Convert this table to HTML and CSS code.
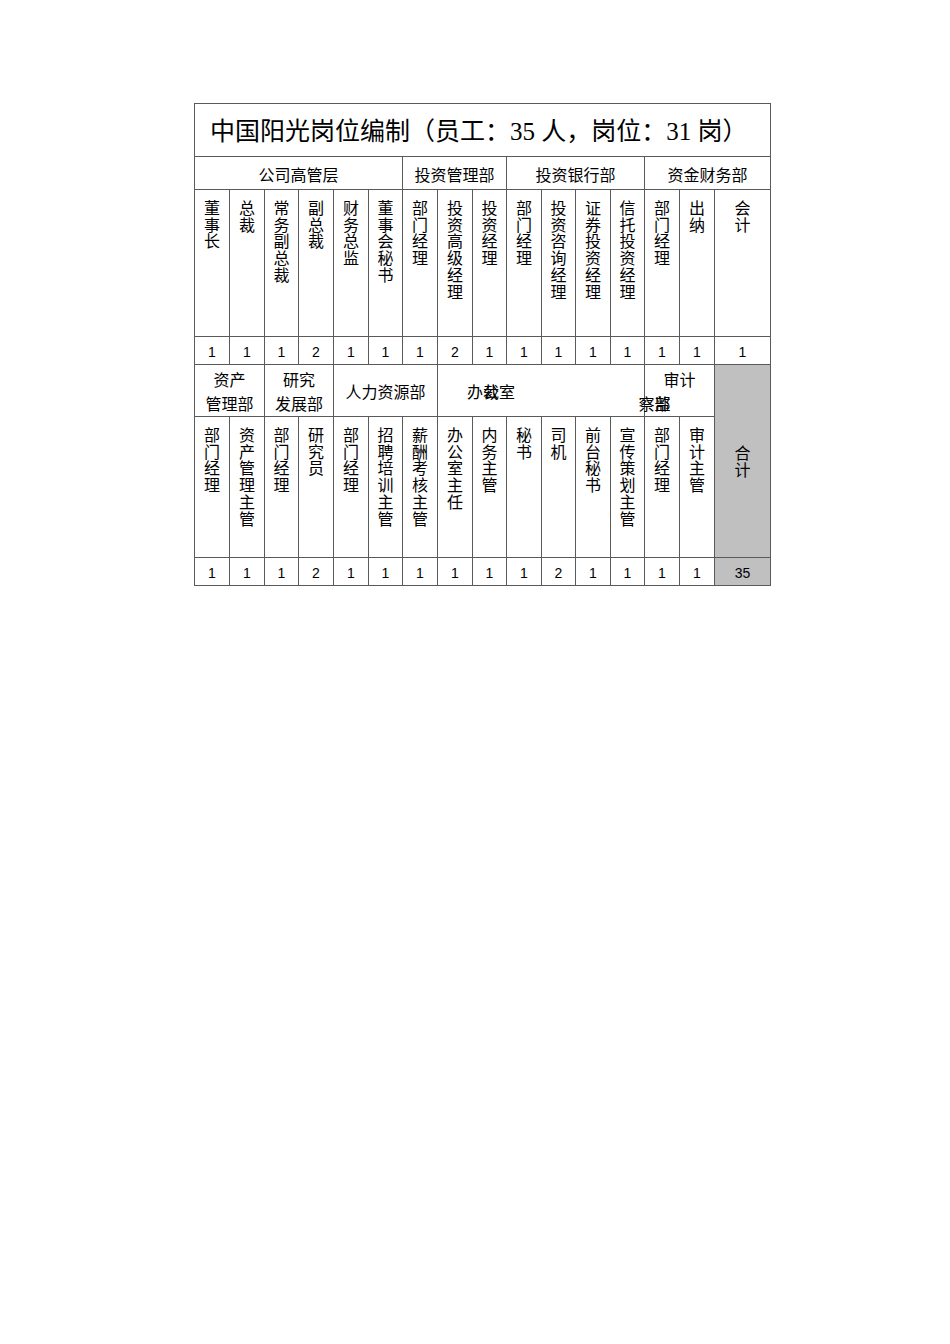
FILE: index.html
```html
<!DOCTYPE html>
<html lang="zh">
<head>
<meta charset="utf-8">
<title>中国阳光岗位编制</title>
<link rel="stylesheet" href="styles.css">
</head>
<body>
<div class="page">
<table class="grid">
<colgroup>
<col class="c35"><col class="c35"><col class="c34"><col class="c35"><col class="c35"><col class="c34"><col class="c35"><col class="c35"><col class="c34"><col class="c35"><col class="c34"><col class="c35"><col class="c34"><col class="c35"><col class="c35"><col class="c56">
</colgroup>
<tr class="r-title"><td colspan="16" class="title">中国阳光岗位编制（员工：35 人，岗位：31 岗）</td></tr>
<tr class="r-dept"><td colspan="6" class="dept">公司高管层</td><td colspan="3" class="dept">投资管理部</td><td colspan="4" class="dept">投资银行部</td><td colspan="3" class="dept">资金财务部</td></tr>
<tr class="r-pos1">
<td class="v"><span class="vt">董事长</span></td>
<td class="v"><span class="vt">总裁</span></td>
<td class="v"><span class="vt">常务副总裁</span></td>
<td class="v"><span class="vt">副总裁</span></td>
<td class="v"><span class="vt">财务总监</span></td>
<td class="v"><span class="vt">董事会秘书</span></td>
<td class="v"><span class="vt">部门经理</span></td>
<td class="v"><span class="vt">投资高级经理</span></td>
<td class="v"><span class="vt">投资经理</span></td>
<td class="v"><span class="vt">部门经理</span></td>
<td class="v"><span class="vt">投资咨询经理</span></td>
<td class="v"><span class="vt">证券投资经理</span></td>
<td class="v"><span class="vt">信托投资经理</span></td>
<td class="v"><span class="vt">部门经理</span></td>
<td class="v"><span class="vt">出纳</span></td>
<td class="v"><span class="vt">会计</span></td>
</tr>
<tr class="r-num"><td class="n">1</td><td class="n">1</td><td class="n">1</td><td class="n">2</td><td class="n">1</td><td class="n">1</td><td class="n">1</td><td class="n">2</td><td class="n">1</td><td class="n">1</td><td class="n">1</td><td class="n">1</td><td class="n">1</td><td class="n">1</td><td class="n">1</td><td class="n">1</td></tr>
<tr class="r-dept2">
<td colspan="2" class="dept2">资产<br>管理部</td>
<td colspan="2" class="dept2">研究<br>发展部</td>
<td colspan="3" class="dept2">人力资源部</td>
<td colspan="6" class="dept2 office"><span class="stack">办公室<span class="over">　裁</span></span></td>
<td colspan="2" class="dept2 audit">审计<br><span class="shift"><span class="stack">察部<span class="over">　监</span></span></span></td>
<td rowspan="2" class="total"><span class="vt">合计</span></td>
</tr>
<tr class="r-pos2">
<td class="v"><span class="vt">部门经理</span></td>
<td class="v"><span class="vt">资产管理主管</span></td>
<td class="v"><span class="vt">部门经理</span></td>
<td class="v"><span class="vt">研究员</span></td>
<td class="v"><span class="vt">部门经理</span></td>
<td class="v"><span class="vt">招聘培训主管</span></td>
<td class="v"><span class="vt">薪酬考核主管</span></td>
<td class="v"><span class="vt">办公室主任</span></td>
<td class="v"><span class="vt">内务主管</span></td>
<td class="v"><span class="vt">秘书</span></td>
<td class="v"><span class="vt">司机</span></td>
<td class="v"><span class="vt">前台秘书</span></td>
<td class="v"><span class="vt">宣传策划主管</span></td>
<td class="v"><span class="vt">部门经理</span></td>
<td class="v"><span class="vt">审计主管</span></td>
</tr>
<tr class="r-num"><td class="n">1</td><td class="n">1</td><td class="n">1</td><td class="n">2</td><td class="n">1</td><td class="n">1</td><td class="n">1</td><td class="n">1</td><td class="n">1</td><td class="n">1</td><td class="n">2</td><td class="n">1</td><td class="n">1</td><td class="n">1</td><td class="n">1</td><td class="n gray">35</td></tr>
</table>
</div>
</body>
</html>
```
FILE: styles.css
```css
html, body {
  margin: 0;
  padding: 0;
  background: #ffffff;
}
.page {
  padding: 103px 0 0 194px;
}
.grid {
  border-collapse: collapse;
  table-layout: fixed;
  width: 577px;
  font-family: "Noto Sans CJK SC", "Noto Sans", sans-serif;
  color: #000;
}
.c35 { width: 35px; }
.c34 { width: 34px; }
.c56 { width: 56px; }
.grid td {
  border: 1px solid #5a5a5a;
  padding: 0;
  text-align: center;
  vertical-align: middle;
  overflow: visible;
}
.r-title { height: 53px; }
.r-dept { height: 33px; }
.r-pos1 { height: 147px; }
.r-num { height: 28px; }
.r-dept2 { height: 52px; }
.r-pos2 { height: 141px; }
.title {
  text-align: left !important;
  padding: 4px 0 0 15px !important;
  font-family: "Liberation Serif", "Noto Sans CJK SC", serif;
  font-size: 25px;
  line-height: 30px;
  white-space: nowrap;
}
.dept {
  font-size: 16px;
  line-height: 20px;
  padding-top: 2px !important;
}
.dept2 {
  font-size: 16px;
  line-height: 24px;
}
.grid td.v {
  vertical-align: top;
  padding-top: 9px;
}
.vt {
  display: block;
  width: 16px;
  margin: 0 auto;
  font-size: 16px;
  line-height: 16.7px;
  word-break: break-all;
}
.n {
  font-family: "Liberation Sans", Arial, sans-serif;
  font-size: 14px;
  padding-top: 2px !important;
}
.total {
  background: #c0c0c0;
}
.gray {
  background: #c0c0c0;
}
.office {
  text-align: left !important;
  padding-left: 29px !important;
}
.stack {
  position: relative;
  display: inline-block;
}
.over {
  position: absolute;
  left: 0;
  top: 0;
  white-space: pre;
}
.audit {
  white-space: nowrap;
}
.shift {
  display: inline-block;
  margin-left: -50px;
}
```
